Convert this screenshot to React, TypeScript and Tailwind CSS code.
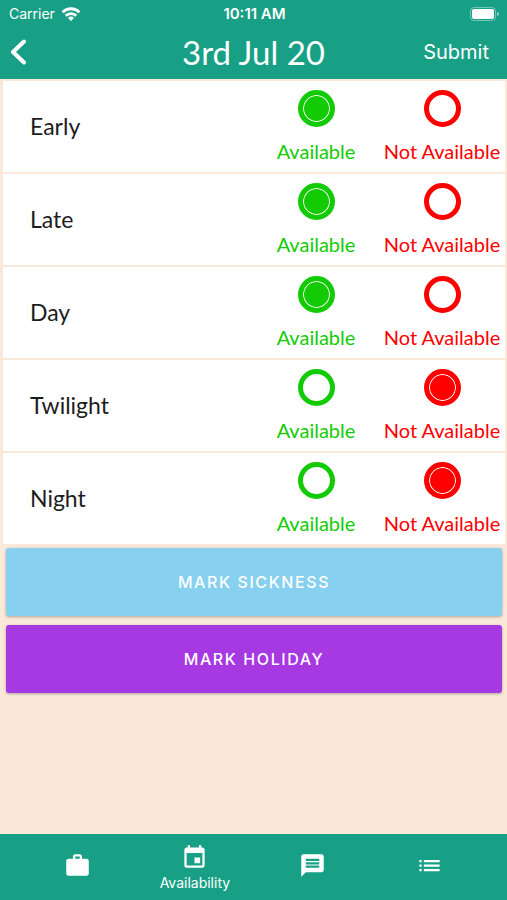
import { useState } from "react";
import { MdEvent, MdList, MdMessage, MdWork } from "react-icons/md";

type Choice = "available" | "unavailable";

const initialShifts: { name: string; choice: Choice }[] = [
  { name: "Early", choice: "available" },
  { name: "Late", choice: "available" },
  { name: "Day", choice: "available" },
  { name: "Twilight", choice: "unavailable" },
  { name: "Night", choice: "unavailable" },
];

function StatusBar() {
  return (
    <div className="grid h-7 grid-cols-3 items-center pl-[9px] pr-[7px] text-[14px] leading-5">
      <div className="flex items-center gap-[6px]">
        <span>Carrier</span>
        <svg viewBox="0 0 20 14" className="h-[14px] w-5" fill="none" stroke="currentColor" strokeWidth="2.8" aria-hidden="true">
          <path d="M1.6 5.2a12 12 0 0 1 16.8 0" />
          <path d="M4.700 8.700a7.6 7.6 0 0 1 10.6 0" />
          <path d="M10 14l-3-3a4.300 4.300 0 0 1 6 0z" fill="currentColor" stroke="none" />
        </svg>
      </div>
      <span className="text-center text-[15px] font-semibold">10:11 AM</span>
      <svg viewBox="0 0 30 14" className="h-[14px] w-[30px] justify-self-end" aria-hidden="true">
        <rect x="0.5" y="0.5" width="25" height="13" rx="3.5" fill="none" stroke="white" strokeOpacity="0.4" />
        <rect x="2" y="2" width="22" height="10" rx="2" fill="white" />
        <path d="M27 5v4c1.2-.4 2-1.100 2-2s-.8-1.600-2-2z" fill="white" fillOpacity="0.5" />
      </svg>
    </div>
  );
}

function Header() {
  return (
    <header className="h-[79px] shrink-0 bg-[#17a085] text-white">
      <StatusBar />
      <div className="grid h-12 grid-cols-[1fr_auto_1fr] items-center px-[10px]">
        <button type="button" aria-label="Back" className="justify-self-start">
          <svg viewBox="0 0 16 26" className="h-[26px] w-4" fill="none" stroke="currentColor" strokeWidth="4" strokeLinecap="round" strokeLinejoin="round">
            <path d="M14 2.500L3 13l11 10.500" />
          </svg>
        </button>
        <h1 className="font-['Lato',sans-serif] text-[33px] leading-10">3rd Jul 20</h1>
        <button type="button" className="justify-self-end pr-2 text-[20px]">Submit</button>
      </div>
    </header>
  );
}

function ShiftRow({ name, choice, onChange }: { name: string; choice: Choice; onChange: (c: Choice) => void }) {
  const radio =
    "size-[37px] appearance-none rounded-full border-[5px] border-current checked:bg-current checked:shadow-[inset_0_0_0_1px_white]";
  return (
    <div role="radiogroup" aria-label={name} className="flex h-[91px] items-center bg-white font-['Lato',sans-serif]">
      <span className="flex-1 pl-[27px] text-[23px] text-[#1c1c1c]">{name}</span>
      <label className="flex w-[126px] flex-col items-center gap-3 text-[20px] leading-6 text-[#13cb05]">
        <input type="radio" name={name} className={radio} checked={choice === "available"} onChange={() => onChange("available")} />
        Available
      </label>
      <label className="flex w-[126px] flex-col items-center gap-3 text-[20px] leading-6 text-[#fe0000]">
        <input type="radio" name={name} className={radio} checked={choice === "unavailable"} onChange={() => onChange("unavailable")} />
        Not Available
      </label>
    </div>
  );
}

function TabBar() {
  const tab = "flex flex-1 flex-col items-center justify-center";
  return (
    <nav className="flex h-[66px] shrink-0 bg-[#17a085] px-[19px] text-white">
      <a href="#work" aria-label="Work" className={`${tab} pb-1`}><MdWork size={27} /></a>
      <a href="#availability" aria-current="page" className={`${tab} pt-1`}>
        <MdEvent size={27} />
        <span className="text-[14px] leading-6">Availability</span>
      </a>
      <a href="#messages" aria-label="Messages" className={`${tab} pb-1`}><MdMessage size={27} /></a>
      <a href="#more" aria-label="More" className={`${tab} pb-1`}><MdList size={27} /></a>
    </nav>
  );
}

export default function App() {
  const [shifts, setShifts] = useState(initialShifts);
  const action =
    "h-[68px] rounded-[3px] text-[16px] font-medium tracking-widest text-white shadow-[0_1px_3px_rgba(0,0,0,0.3)]";
  return (
    <div className="flex min-h-screen flex-col bg-[#fae8d9] font-['Inter',sans-serif]">
      <Header />
      <main className="flex-1 pl-[3px] pr-[2px] pt-[2px]">
        <div className="flex flex-col gap-[2px]">
          {shifts.map((s) => (
            <ShiftRow
              key={s.name}
              name={s.name}
              choice={s.choice}
              onChange={(choice) => setShifts(shifts.map((o) => (o.name === s.name ? { ...o, choice } : o)))}
            />
          ))}
        </div>
        <div className="flex flex-col gap-[9px] px-[3px] pt-1">
          <button type="button" className={`${action} bg-[#87d0f0]`}>MARK SICKNESS</button>
          <button type="button" className={`${action} bg-[#a739e2]`}>MARK HOLIDAY</button>
        </div>
      </main>
      <TabBar />
    </div>
  );
}
